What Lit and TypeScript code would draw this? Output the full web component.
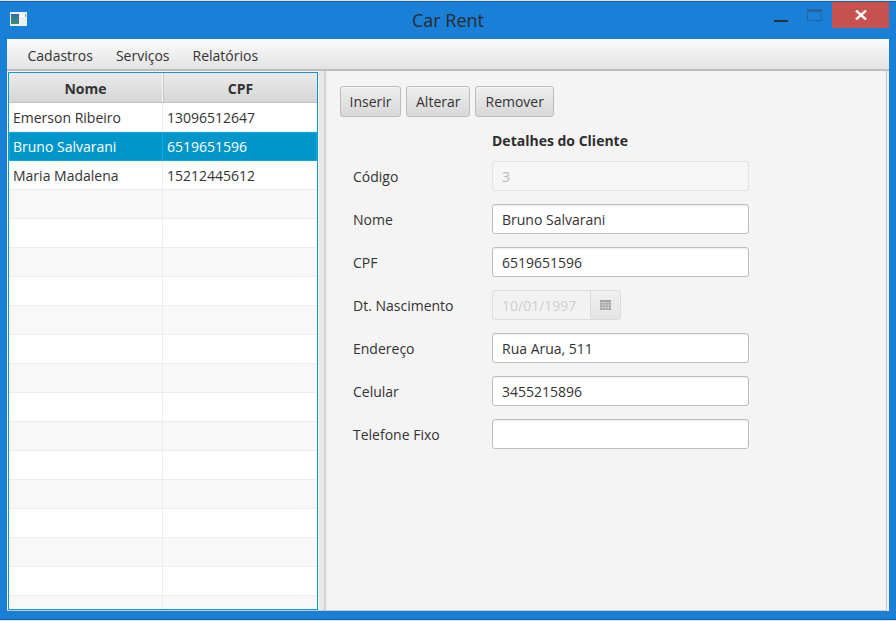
import { LitElement, html, css, svg } from "lit";
import { customElement } from "lit/decorators.js";

const data = [
  ["Emerson Ribeiro", "13096512647"],
  ["Bruno Salvarani", "6519651596"],
  ["Maria Madalena", "15212445612"],
];

@customElement("app-root")
export class AppRoot extends LitElement {
  static styles = css`
    :host { display: block; width: 896px; height: 621px; overflow: hidden; box-sizing: border-box; padding-top: 1px; background: #dfe3e6; font-family: "Open Sans", "Noto Sans", sans-serif; font-size: 14px; color: #333; }
    .win { box-sizing: border-box; width: 896px; height: 619px; background: #1a7fd6; border-top: 1px solid #1265ad; border-bottom: 1px solid #1265ad; display: flex; flex-direction: column; padding: 0 7px 8px 7px; }
    .title { height: 37px; flex: none; position: relative; margin: 0 -7px; }
    .appicon { position: absolute; left: 10px; top: 10px; width: 17px; height: 14px; }
    .cap { position: absolute; left: 0; right: 0; top: 6px; text-align: center; font-size: 18px; color: #2b2b2b; line-height: 24px; }
    .min { position: absolute; left: 774px; top: 18px; width: 14px; height: 2px; background: #2a2f36; }
    .max { position: absolute; left: 807px; top: 7px; width: 15px; height: 12px; box-sizing: border-box; border: 1px solid #2a6298; border-top-width: 3px; }
    .close { position: absolute; left: 832px; top: 0; width: 57px; height: 26px; background: #c75050; display: flex; align-items: center; justify-content: center; }
    .client { flex: 1; min-height: 0; background: #f0f0f0; display: flex; flex-direction: column; }
    .menubar { height: 32px; flex: none; box-sizing: border-box; background: linear-gradient(#fbfbfb, #e3e3e3); border-bottom: 2px solid #bdbdbd; display: flex; align-items: flex-start; padding-left: 9px; }
    .menu { padding: 0 11.5px; line-height: 33px; height: 30px; color: #333; }
    .split { flex: 1; min-height: 0; display: flex; margin: 0 2px 0 0; background: #f4f4f4; border-right: 1px solid #cacaca; border-bottom: 1px solid #cacaca; }
    .tablepane { width: 310px; flex: none; margin: 1px 0 0 1px; box-sizing: border-box; border: 1px solid #0d9ac9; background: #fff; display: flex; flex-direction: column; overflow: hidden; }
    .thead { height: 30px; flex: none; display: grid; grid-template-columns: 154px 154px; background: linear-gradient(#eaeaea, #d6d6d6); border-bottom: 1px solid #c2c2c2; box-sizing: border-box; }
    .th { text-align: center; font-weight: 700; line-height: 32px; height: 29px; border-right: 1px solid #f5f5f5; border-left: 1px solid #c8c8c8; color: #333; }
    .th:first-child { border-left: 0; }
    .th:last-child { border-right: 0; }
    .row { height: 29px; flex: none; display: grid; grid-template-columns: 154px 154px; box-sizing: border-box; border-bottom: 1px solid #ededed; background: #fff; }
    .row.odd { background: #f8f8f8; }
    .td { padding-left: 4px; line-height: 30px; height: 28px; border-right: 1px solid #ededed; white-space: nowrap; }
    .td:last-child { border-right: 0; }
    .row.sel { background: #0096c9; color: #fff; border: 1px solid #13a9dc; grid-template-columns: 153px 153px; }
    .row.sel .td { border-right-color: #13a9dc; height: 27px; line-height: 28px; }
    .row.sel .td:first-child { padding-left: 3px; }
    .divider { width: 8px; flex: none; box-sizing: border-box; background: #e8e8e8; border-left: 1px solid #f4f4f4; border-right: 2px solid #d4d4d4; }
    .detail { flex: 1; min-width: 0; padding: 15px 0 0 13px; box-sizing: border-box; border-left: 1px solid #efefef; }
    .toolbar { display: flex; gap: 5px; margin-bottom: 14px; }
    .btn { height: 31px; box-sizing: border-box; padding: 0 9px; background: linear-gradient(#eeeeee, #d8d8d8); border: 1px solid #bcbcbc; border-radius: 3px; line-height: 29px; box-shadow: inset 0 1px 0 #f6f6f6; color: #333; }
    .btn:first-child { padding: 0 8.5px; }
    .form { display: grid; grid-template-columns: 139px 257px; row-gap: 13px; padding-left: 13px; align-items: center; }
    .h { grid-column: 2; font-weight: 700; line-height: 20px; margin-bottom: -3px; color: #2e2e2e; }
    .lab { line-height: 32px; height: 30px; color: #333; }
    .inp { height: 30px; box-sizing: border-box; background: #fff; border: 1px solid #bdbdbd; border-radius: 3px; padding-left: 9px; line-height: 30px; box-shadow: inset 0 2px 2px -1px #ececec; color: #333; }
    .inp.dis { background: #f6f6f6; border-color: #e2e2e2; box-shadow: none; color: #b8b8b8; }
    .date { display: flex; width: 129px; height: 30px; box-sizing: border-box; border: 1px solid #dcdcdc; border-radius: 3px; background: #f2f2f2; }
    .date .val { width: 98px; box-sizing: border-box; padding-left: 9px; line-height: 30px; color: #cfcfcf; border-right: 1px solid #dcdcdc; }
    .date .cal { flex: 1; display: flex; align-items: center; justify-content: center; background: linear-gradient(#f0f0f0, #e4e4e4); }
  `;

  private rows() {
    const out = [];
    for (let i = 0; i < 18; i++) {
      const d = data[i];
      const cls = "row" + (i === 1 ? " sel" : "") + (i % 2 === 1 ? " odd" : "");
      out.push(html`<div class=${cls}><div class="td">${d ? d[0] : ""}</div><div class="td">${d ? d[1] : ""}</div></div>`);
    }
    return out;
  }

  render() {
    return html`<div class="win">
      <div class="title">
        <svg class="appicon" viewBox="0 0 17 14">
          <defs><linearGradient id="g" x1="0" y1="0" x2="0" y2="1"><stop offset="0" stop-color="#2f6f9a"/><stop offset="1" stop-color="#3f8f78"/></linearGradient></defs>
          <rect x="0" y="0" width="17" height="14" fill="#eeeeee"/>
          <rect x="1" y="2" width="8" height="10" fill="url(#g)"/>
          <rect x="10" y="2" width="5" height="3" fill="#ffffff"/>
          <rect x="15" y="2" width="1" height="3" fill="#6aa58f"/>
        </svg>
        <div class="cap">Car Rent</div>
        <div class="min"></div>
        <div class="max"></div>
        <div class="close">
          <svg width="12" height="10" viewBox="0 0 12 10"><path d="M1 0.5 L11 9.5 M11 0.5 L1 9.5" stroke="#fff" stroke-width="2.4" fill="none"/></svg>
        </div>
      </div>
      <div class="client">
        <div class="menubar">
          <div class="menu">Cadastros</div><div class="menu">Serviços</div><div class="menu">Relatórios</div>
        </div>
        <div class="split">
          <div class="tablepane">
            <div class="thead"><div class="th">Nome</div><div class="th">CPF</div></div>
            ${this.rows()}
          </div>
          <div class="divider"></div>
          <div class="detail">
            <div class="toolbar">
              <div class="btn">Inserir</div><div class="btn">Alterar</div><div class="btn">Remover</div>
            </div>
            <div class="form">
              <div class="h">Detalhes do Cliente</div>
              <div class="lab">Código</div><div class="inp dis">3</div>
              <div class="lab">Nome</div><div class="inp">Bruno Salvarani</div>
              <div class="lab">CPF</div><div class="inp">6519651596</div>
              <div class="lab">Dt. Nascimento</div>
              <div class="date"><div class="val">10/01/1997</div><div class="cal">
                <svg width="11" height="10" viewBox="0 0 11 10">${svg`<rect width="11" height="10" fill="#a3a3a3"/><path d="M0 2.5H11M0 5H11M0 7.5H11M2.75 2V10M5.5 2V10M8.25 2V10" stroke="#dcdcdc" stroke-width="0.6"/>`}</svg>
              </div></div>
              <div class="lab">Endereço</div><div class="inp">Rua Arua, 511</div>
              <div class="lab">Celular</div><div class="inp">3455215896</div>
              <div class="lab">Telefone Fixo</div><div class="inp"></div>
            </div>
          </div>
        </div>
      </div>
    </div>`;
  }
}
